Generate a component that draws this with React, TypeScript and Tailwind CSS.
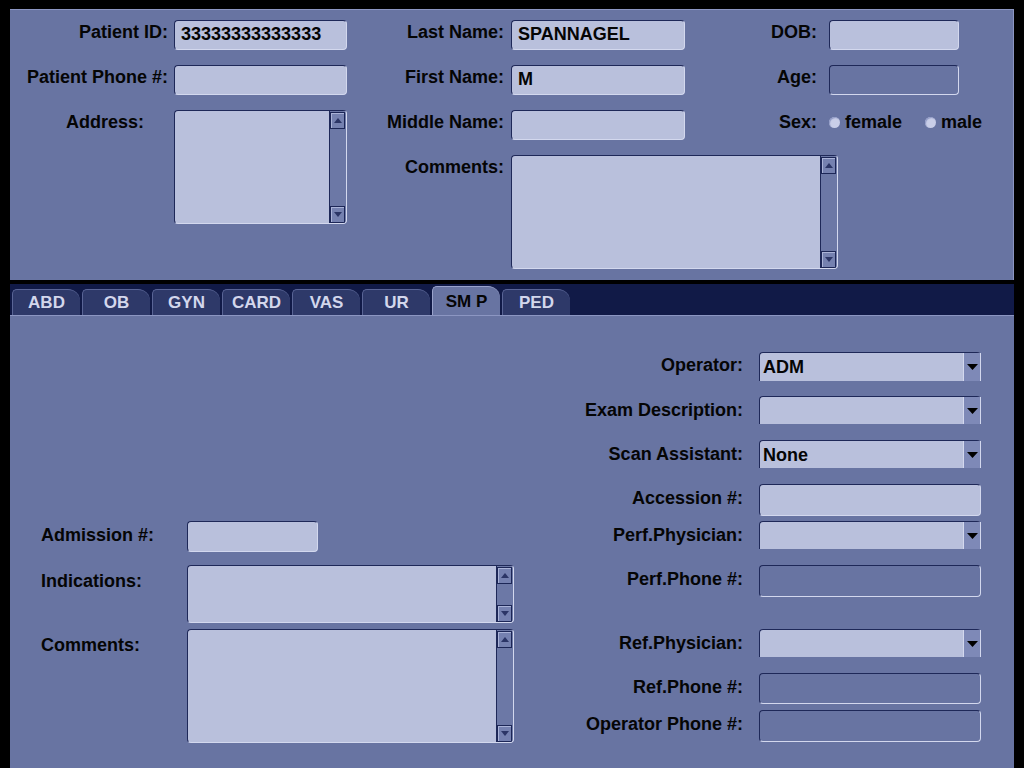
import React from "react";

const font = "font-['Liberation_Sans',Arial,sans-serif]";
const label = "text-[18px] font-bold leading-[24px] text-[#050505] whitespace-nowrap";

type BoxProps = { w: string; h: string; value?: string; muted?: boolean };

const Field: React.FC<BoxProps> = ({ w, h, value, muted }) => (
  <div
    className={`${w} ${h} shrink-0 rounded-[4px] border-t border-l border-t-[#1e2858] border-l-[#1e2858] border-b border-r border-b-[#d3d8ee] border-r-[#d3d8ee] ${
      muted ? "bg-[#6874a2]" : "bg-[#b9c0dc]"
    } pl-[6px] pt-[1px] ${label}`}
  >
    {value}
  </div>
);

const Arrow = ({ up }: { up?: boolean }) => (
  <svg width="8" height="5" viewBox="0 0 8 5">
    <path d={up ? "M0 5 L4 0 L8 5 Z" : "M0 0 L8 0 L4 5 Z"} fill="#2b3566" />
  </svg>
);

const ScrollBtn = ({ up }: { up?: boolean }) => (
  <div className="h-[17px] w-full bg-[#7581b0] border border-[#1c2656] shadow-[inset_1px_1px_0_#aab3d8] flex items-center justify-center">
    <Arrow up={up} />
  </div>
);

const TextArea: React.FC<BoxProps> = ({ w, h }) => (
  <div
    className={`${w} ${h} shrink-0 flex rounded-[4px] border-t border-l border-t-[#1e2858] border-l-[#1e2858] border-b border-r border-b-[#d3d8ee] border-r-[#d3d8ee] bg-[#b9c0dc] overflow-hidden`}
  >
    <div className="flex-1" />
    <div className="w-[17px] h-full flex flex-col justify-between bg-[#6c78a6] border-l border-[#1e2858] pt-[1px] pr-[1px]">
      <ScrollBtn up />
      <ScrollBtn />
    </div>
  </div>
);

const Dropdown: React.FC<BoxProps> = ({ w, h, value }) => (
  <div
    className={`${w} ${h} shrink-0 flex rounded-t-[4px] border-t border-l border-[#1e2858] bg-[#b9c0dc]`}
  >
    <div className={`flex-1 pl-[3px] flex items-center ${label}`}>{value}</div>
    <div className="w-[18px] h-full bg-[#7e89b7] border-l border-[#d3d8ee] border-r border-r-[#d3d8ee] flex items-center justify-center">
      <svg width="11" height="6" viewBox="0 0 11 6">
        <path d="M0 0 L11 0 L5.5 6 Z" fill="#000" />
      </svg>
    </div>
  </div>
);

const Radio = () => (
  <div className="w-[11px] h-[11px] rounded-full bg-[#c9cee8] shadow-[inset_1px_1px_1px_#8e98c4]" />
);

const tabs = ["ABD", "OB", "GYN", "CARD", "VAS", "UR", "SM P", "PED"];

type Row = {
  name: string;
  kind: "drop" | "field" | "muted";
  value?: string;
  mt: string;
  h: string;
  lift?: boolean;
};

const rightRows: Row[] = [
  { name: "Operator:", kind: "drop", value: "ADM", mt: "mt-0", h: "h-[29px]", lift: true },
  { name: "Exam Description:", kind: "drop", mt: "mt-[15px]", h: "h-[28px]" },
  { name: "Scan Assistant:", kind: "drop", value: "None", mt: "mt-[16px]", h: "h-[28px]" },
  { name: "Accession #:", kind: "field", mt: "mt-[16px]", h: "h-[32px]", lift: true },
  { name: "Perf.Physician:", kind: "drop", mt: "mt-[5px]", h: "h-[28px]" },
  { name: "Perf.Phone #:", kind: "muted", mt: "mt-[16px]", h: "h-[32px]", lift: true },
  { name: "Ref.Physician:", kind: "drop", mt: "mt-[32px]", h: "h-[28px]" },
  { name: "Ref.Phone #:", kind: "muted", mt: "mt-[16px]", h: "h-[31px]", lift: true },
  { name: "Operator Phone #:", kind: "muted", mt: "mt-[6px]", h: "h-[32px]", lift: true },
];

export default function App() {
  return (
    <div className={`${font} w-[1024px] h-[768px] bg-black flex flex-col overflow-hidden`}>
      {/* patient panel */}
      <div className="mx-[10px] mt-[9px] h-[271px] bg-[#6874a2] border-t border-[#8c96c2] border-r border-r-[#8c96c2] flex pt-[10px]">
        <div className="w-[337px] flex flex-col gap-[15px]">
          <div className="flex items-start">
            <div className={`w-[158px] text-right ${label}`}>Patient ID:</div>
            <div className="ml-[6px]">
              <Field w="w-[173px]" h="h-[30px]" value="33333333333333" />
            </div>
          </div>
          <div className="flex items-start">
            <div className={`w-[158px] text-right ${label}`}>Patient Phone #:</div>
            <div className="ml-[6px]">
              <Field w="w-[173px]" h="h-[30px]" />
            </div>
          </div>
          <div className="flex items-start">
            <div className={`w-[158px] text-right pr-[24px] ${label}`}>Address:</div>
            <div className="ml-[6px]">
              <TextArea w="w-[173px]" h="h-[114px]" />
            </div>
          </div>
        </div>

        <div className="flex flex-col gap-[15px]">
          <div className="flex items-start">
            <div className={`w-[157px] text-right ${label}`}>Last Name:</div>
            <div className="ml-[7px]">
              <Field w="w-[174px]" h="h-[30px]" value="SPANNAGEL" />
            </div>
            <div className={`w-[132px] text-right ${label}`}>DOB:</div>
            <div className="ml-[12px]">
              <Field w="w-[130px]" h="h-[30px]" />
            </div>
          </div>
          <div className="flex items-start">
            <div className={`w-[157px] text-right ${label}`}>First Name:</div>
            <div className="ml-[7px]">
              <Field w="w-[174px]" h="h-[30px]" value="M" />
            </div>
            <div className={`w-[132px] text-right ${label}`}>Age:</div>
            <div className="ml-[12px]">
              <Field w="w-[130px]" h="h-[30px]" muted />
            </div>
          </div>
          <div className="flex items-start">
            <div className={`w-[157px] text-right ${label}`}>Middle Name:</div>
            <div className="ml-[7px]">
              <Field w="w-[174px]" h="h-[30px]" />
            </div>
            <div className={`w-[132px] text-right ${label}`}>Sex:</div>
            <div className="ml-[12px] flex items-center h-[24px]">
              <Radio />
              <span className={`ml-[5px] ${label}`}>female</span>
              <div className="ml-[23px]">
                <Radio />
              </div>
              <span className={`ml-[5px] ${label}`}>male</span>
            </div>
          </div>
          <div className="flex items-start">
            <div className={`w-[157px] text-right ${label}`}>Comments:</div>
            <div className="ml-[7px]">
              <TextArea w="w-[327px]" h="h-[114px]" />
            </div>
          </div>
        </div>
      </div>

      {/* tabs */}
      <div className="mx-[10px] mt-[4px] h-[31px] bg-[#111a47] flex items-end gap-[2px] pl-[2px]">
        {tabs.map((t) =>
          t === "SM P" ? (
            <div
              key={t}
              className="w-[68px] h-[29px] rounded-tl-[5px] rounded-tr-[12px] bg-[#6874a2] border-t border-l border-[#9aa3cc] flex items-center justify-center text-[17px] font-bold text-[#050505] pt-[1px]"
            >
              {t}
            </div>
          ) : (
            <div
              key={t}
              className="w-[68px] h-[26px] rounded-tl-[5px] rounded-tr-[12px] bg-[#2e3969] border-t border-l border-[#5a6596] flex items-center justify-center text-[17px] font-bold text-[#d3d7ec]"
            >
              {t}
            </div>
          )
        )}
      </div>

      {/* exam panel */}
      <div className="mx-[10px] flex-1 bg-[#6874a2] border-t border-[#8c96c2] flex pt-[36px]">
        <div className="w-[504px] pl-[31px] pt-[169px] flex flex-col">
          <div className="flex items-center">
            <div className={`w-[146px] mb-[4px] ${label}`}>Admission #:</div>
            <Field w="w-[131px]" h="h-[31px]" />
          </div>
          <div className="flex items-start mt-[13px]">
            <div className={`w-[146px] pt-[4px] ${label}`}>Indications:</div>
            <TextArea w="w-[327px]" h="h-[58px]" />
          </div>
          <div className="flex items-start mt-[6px]">
            <div className={`w-[146px] pt-[4px] ${label}`}>Comments:</div>
            <TextArea w="w-[327px]" h="h-[114px]" />
          </div>
        </div>

        <div className="flex flex-col">
          {rightRows.map((r) => (
            <div key={r.name} className={`flex items-center ${r.mt}`}>
              <div className={`w-[229px] text-right ${r.lift ? "mb-[4px]" : ""} ${label}`}>
                {r.name}
              </div>
              <div className="ml-[16px]">
                {r.kind === "drop" ? (
                  <Dropdown w="w-[222px]" h={r.h} value={r.value} />
                ) : (
                  <Field w="w-[222px]" h={r.h} muted={r.kind === "muted"} />
                )}
              </div>
            </div>
          ))}
        </div>
      </div>
    </div>
  );
}
